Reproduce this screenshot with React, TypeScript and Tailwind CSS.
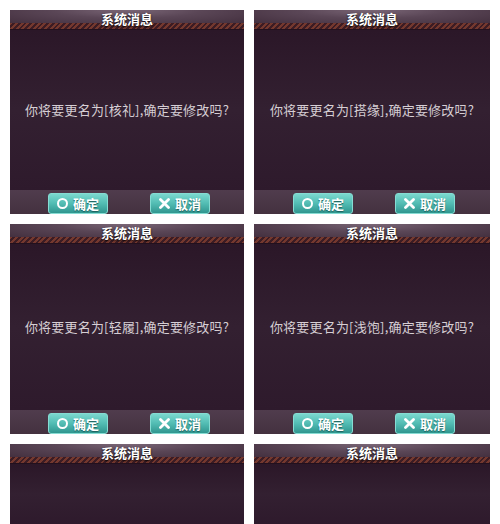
const dialogs = [
  { name: "核礼", h: "h-[204px]", body: "h-[160px]" },
  { name: "搭缘", h: "h-[204px]", body: "h-[160px]" },
  { name: "轻履", h: "h-[210px]", body: "h-[166px]" },
  { name: "浅饱", h: "h-[210px]", body: "h-[166px]" },
  { name: "", h: "h-[80px]", body: "h-[60px]" },
  { name: "", h: "h-[80px]", body: "h-[60px]" },
];

const font = { fontFamily: '"Noto Sans CJK SC", "Noto Sans", sans-serif' };

export default function App() {
  return (
    <div className="h-[524px] w-[500px] overflow-hidden bg-white" style={font}>
      <div className="grid grid-cols-[234px_236px] gap-x-[10px] gap-y-[10px] pl-[10px] pt-[10px]">
        {dialogs.map((d, i) => (
          <Dialog key={i} name={d.name} h={d.h} body={d.body} />
        ))}
      </div>
    </div>
  );
}

function Dialog({ name, h, body }: { name: string; h: string; body: string }) {
  return (
    <div className={`flex flex-col overflow-hidden ${h}`}>
      {/* Title bar */}
      <div className="relative h-[20px] shrink-0">
        <div className="h-[13px] bg-[radial-gradient(ellipse_at_50%_0%,#7a6676_0%,#5a4656_45%,#44303f_100%)]" />
        <div className="h-[6px] bg-[repeating-linear-gradient(135deg,#74382e_0px,#74382e_2px,#3c1c24_2px,#3c1c24_4px)]" />
        <div className="h-[1px] bg-[#22101d]" />
        <span className="absolute inset-x-0 top-[1px] text-center text-[13px] font-bold leading-[16px] text-white [text-shadow:0_1px_2px_#000]">
          系统消息
        </span>
      </div>

      {/* Body */}
      <div
        className={`flex shrink-0 items-center justify-center whitespace-nowrap bg-[#301c2e] bg-[linear-gradient(180deg,#2b1728_0%,#332031_50%,#2e1a2c_100%)] text-[13px] tracking-[0.2px] text-[#d6ced4] ${body}`}
      >
        {name && <span>你将要更名为[{name}],确定要修改吗?</span>}
      </div>

      {/* Footer */}
      {name && (
        <div className="flex h-[24px] shrink-0 justify-center gap-[42px] bg-[linear-gradient(180deg,#503c4d_0%,#44313f_100%)] pt-[3px] pl-[4px]">
          <Button kind="ok" />
          <Button kind="cancel" />
        </div>
      )}
    </div>
  );
}

function Button({ kind }: { kind: "ok" | "cancel" }) {
  return (
    <div className="flex h-[21px] w-[60px] items-center justify-center gap-[5px] rounded-[3px] border border-[#86dcd3] bg-[linear-gradient(180deg,#7ad8ce_0%,#52bcb3_50%,#30968f_100%)] text-[13px] font-bold text-white [text-shadow:0_1px_1px_#1c5f5a]">
      {kind === "ok" ? (
        <span className="h-[11px] w-[11px] rounded-full border-[2px] border-white" />
      ) : (
        <svg width="11" height="11" viewBox="0 0 11 11">
          <path d="M1.5 1.5 L9.5 9.5 M9.5 1.5 L1.5 9.5" stroke="#fff" strokeWidth="2.8" strokeLinecap="round" />
        </svg>
      )}
      <span className="leading-none">{kind === "ok" ? "确定" : "取消"}</span>
    </div>
  );
}
